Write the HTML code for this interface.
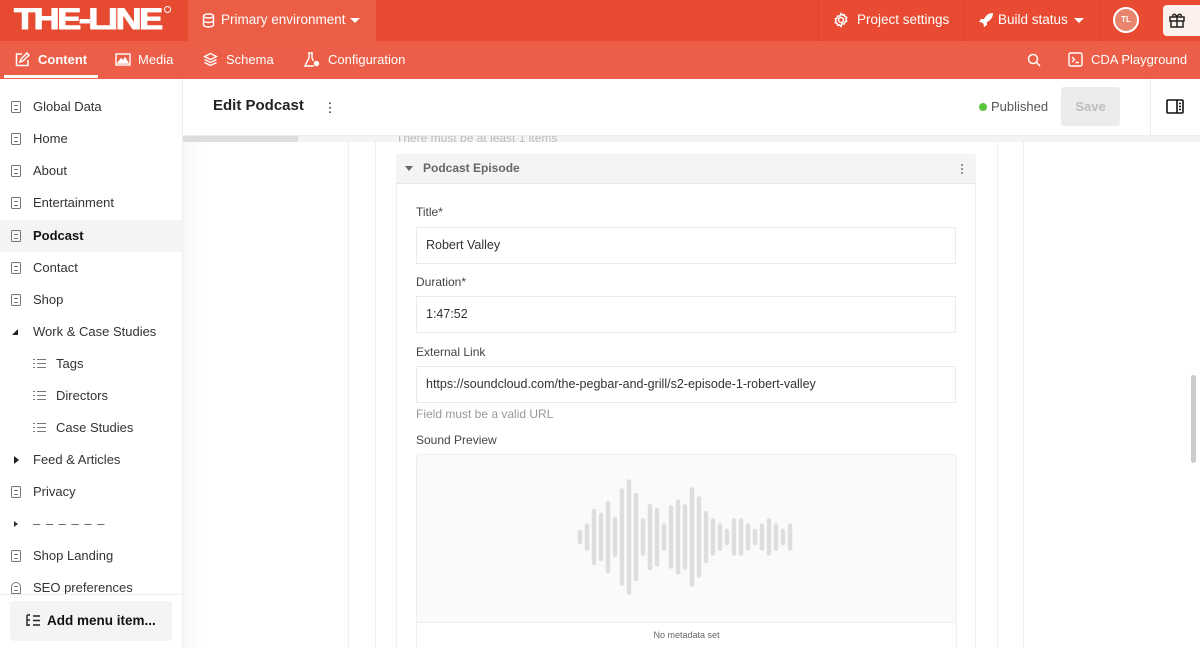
<!DOCTYPE html>
<html><head><meta charset="utf-8"><style>
*{box-sizing:border-box;margin:0;padding:0}
body{width:1200px;height:648px;overflow:hidden;font-family:"Liberation Sans",sans-serif;background:#fff;position:relative;color:#222}
.abs{position:absolute}
.top{left:0;top:0;width:1200px;height:41px;background:#e84b32}
.nav{left:0;top:41px;width:1200px;height:38px;background:#ec5e47}
.w{color:#fff;font-size:14px}
.side{left:0;top:79px;width:183px;height:569px;background:#fff;border-right:1px solid #eee}
.it{position:absolute;left:0;width:182px;height:32px;font-size:13px;color:#333;line-height:32px;padding-left:33px}
.doc{position:absolute;left:11px;top:10px;width:10px;height:12px;border:1.3px solid #777;border-radius:1.5px}
.doc:after{content:"";position:absolute;left:2px;top:3px;width:4px;height:3px;border-top:1px solid #777;border-bottom:1px solid #777}
.lst{position:absolute;left:33px;top:10px;width:13px;height:11px;background:linear-gradient(#777,#777) 4px 1px/9px 1.2px no-repeat,linear-gradient(#777,#777) 4px 5px/9px 1.2px no-repeat,linear-gradient(#777,#777) 4px 9px/9px 1.2px no-repeat,linear-gradient(#777,#777) 0 1px/2px 1.2px no-repeat,linear-gradient(#777,#777) 0 5px/2px 1.2px no-repeat,linear-gradient(#777,#777) 0 9px/2px 1.2px no-repeat}
.lbl{position:absolute;left:416px;font-size:12px;color:#444}
.inp{position:absolute;left:416px;width:540px;height:37px;border:1px solid #eaeaea;font-size:12.5px;color:#333;line-height:35px;padding-left:9px}
</style></head><body>
<div class="abs top"></div>
<div class="abs" style="left:0;top:0;width:188px;height:41px;background:#e64a30"></div>
<div class="abs" style="left:14px;top:4px;font:900 30px/32px 'Liberation Sans',sans-serif;color:#fff;letter-spacing:-2px;transform:scaleX(1.2);transform-origin:left;-webkit-text-stroke:1px #fff">THE-LINE</div>
<div class="abs" style="left:164px;top:6px;width:7px;height:7px;border:1px solid #fff;border-radius:50%"></div>
<div class="abs" style="left:188px;top:0;width:188px;height:41px;background:#ec5d46"></div>
<svg class="abs" style="left:202px;top:13px" width="13" height="15" viewBox="0 0 13 15" fill="none" stroke="#fff" stroke-width="1.4"><ellipse cx="6.5" cy="3" rx="5" ry="2"/><path d="M1.5 3v9c0 1.1 2.2 2 5 2s5-.9 5-2V3M1.5 7.5c0 1.1 2.2 2 5 2s5-.9 5-2"/></svg>
<div class="abs w" style="left:221px;top:12px;font-size:13.5px">Primary environment</div>
<div class="abs" style="left:350px;top:18px;border:5px solid transparent;border-top:5px solid #fff;border-bottom:0"></div>
<div class="abs" style="left:818px;top:0;width:1px;height:41px;background:#d9442c"></div>
<div class="abs" style="left:963px;top:0;width:1px;height:41px;background:#d9442c"></div>
<div class="abs" style="left:1100px;top:0;width:1px;height:41px;background:#d9442c"></div>
<svg class="abs" style="left:833px;top:12px" width="16" height="16" viewBox="0 0 16 16" fill="none" stroke="#fff" stroke-width="1.5"><circle cx="8" cy="8" r="2.5"/><path d="M8 1.5l1.3 1.6 2-.5.5 2 1.9.8-.7 1.9.7 1.9-1.9.8-.5 2-2-.5L8 14.5l-1.3-1.6-2 .5-.5-2-1.9-.8.7-1.9-.7-1.9 1.9-.8.5-2 2 .5z"/></svg>
<div class="abs w" style="left:857px;top:12px;font-size:13.5px">Project settings</div>
<svg class="abs" style="left:978px;top:12px" width="16" height="16" viewBox="0 0 16 16" fill="#fff"><path d="M15 1c-4 0-7 2-9 6L3 7 1 10l3 .5L5.5 12 6 15l3-2v-3c4-2 6-5 6-9z"/></svg>
<div class="abs w" style="left:998px;top:12px;font-size:13.5px">Build status</div>
<div class="abs" style="left:1074px;top:18px;border:5px solid transparent;border-top:5px solid #fff;border-bottom:0"></div>
<div class="abs" style="left:1113px;top:7px;width:26px;height:26px;border-radius:50%;background:#e9846f;border:2px solid #fff;color:#fff;font-size:8px;font-weight:bold;text-align:center;line-height:22px">TL</div>
<div class="abs" style="left:1163px;top:5px;width:37px;height:31px;background:#fdf1ee;border-radius:4px 0 0 4px"></div>
<svg class="abs" style="left:1168px;top:11px" width="18" height="18" viewBox="0 0 18 18" fill="none" stroke="#222" stroke-width="1.5"><rect x="2" y="6" width="14" height="4"/><path d="M3 10v6h12v-6M9 6v10M9 6C7 2 4 3 5 5.5M9 6c2-4 5-3 4-.5"/></svg>
<div class="abs nav"></div>
<svg class="abs" style="left:15px;top:52px" width="15" height="15" viewBox="0 0 15 15" fill="none" stroke="#fff" stroke-width="1.5"><path d="M7 2H1.5v11.5H13V8M5 10l1-3 6-6 2 2-6 6z"/></svg>
<div class="abs w" style="left:38px;top:52px;font-weight:bold;font-size:13px">Content</div>
<div class="abs" style="left:4px;top:75px;width:94px;height:3px;background:#fff"></div>
<svg class="abs" style="left:115px;top:53px" width="16" height="13" viewBox="0 0 16 13" fill="none" stroke="#fff" stroke-width="1.4"><rect x="1" y="1" width="14" height="11"/><path d="M3 10l3-4 2 2 2-3 3 5z" fill="#fff"/></svg>
<div class="abs w" style="left:138px;top:52px;font-size:13px">Media</div>
<svg class="abs" style="left:203px;top:52px" width="15" height="15" viewBox="0 0 15 15" fill="none" stroke="#fff" stroke-width="1.4"><path d="M7.5 1.5l6 3-6 3-6-3zM1.5 7.5l6 3 6-3M1.5 10.5l6 3 6-3"/></svg>
<div class="abs w" style="left:226px;top:52px;font-size:13px">Schema</div>
<svg class="abs" style="left:304px;top:52px" width="16" height="15" viewBox="0 0 16 15" fill="none" stroke="#fff" stroke-width="1.4"><path d="M4 1h5M5 1v5L1 14h9M8 1v5l1.5 3"/><circle cx="12.5" cy="11.5" r="2" fill="#fff"/></svg>
<div class="abs w" style="left:328px;top:52px;font-size:13px">Configuration</div>
<svg class="abs" style="left:1027px;top:53px" width="14" height="14" viewBox="0 0 14 14" fill="none" stroke="#fff" stroke-width="1.5"><circle cx="6" cy="6" r="4.5"/><path d="M9.5 9.5L13 13"/></svg>
<svg class="abs" style="left:1068px;top:52px" width="15" height="15" viewBox="0 0 15 15" fill="none" stroke="#fff" stroke-width="1.4"><rect x="1" y="1" width="13" height="13" rx="1.5"/><path d="M4 5l2.5 2.5L4 10M7.5 10.5H11"/></svg>
<div class="abs w" style="left:1091px;top:52px;font-size:13px">CDA Playground</div>

<div class="abs side"></div>
<div class="abs" style="left:0;top:79px;width:183px;height:569px">
<div class="it" style="top:12px"><span class="doc"></span>Global Data</div>
<div class="it" style="top:44px"><span class="doc"></span>Home</div>
<div class="it" style="top:76px"><span class="doc"></span>About</div>
<div class="it" style="top:108px"><span class="doc"></span>Entertainment</div>
<div class="it" style="top:141px;background:#f4f4f4;font-weight:bold;color:#111"><span class="doc"></span>Podcast</div>
<div class="it" style="top:173px"><span class="doc"></span>Contact</div>
<div class="it" style="top:205px"><span class="doc"></span>Shop</div>
<div class="it" style="top:237px"><span class="abs" style="left:12px;top:13px;border-left:6px solid transparent;border-bottom:6px solid #222"></span>Work &amp; Case Studies</div>
<div class="it" style="top:269px;padding-left:56px"><span class="lst"></span>Tags</div>
<div class="it" style="top:301px;padding-left:56px"><span class="lst"></span>Directors</div>
<div class="it" style="top:333px;padding-left:56px"><span class="lst"></span>Case Studies</div>
<div class="it" style="top:365px"><span class="abs" style="left:14px;top:12px;border-top:4px solid transparent;border-bottom:4px solid transparent;border-left:5px solid #222"></span>Feed &amp; Articles</div>
<div class="it" style="top:397px"><span class="doc"></span>Privacy</div>
<div class="it" style="top:429px;color:#555;letter-spacing:1px"><span class="abs" style="left:14px;top:13px;width:0;height:0;border-top:3px solid transparent;border-bottom:3px solid transparent;border-left:4px solid #333"></span>– – – – – –</div>
<div class="it" style="top:461px"><span class="doc"></span>Shop Landing</div>
<div class="it" style="top:493px"><span class="doc" style="border-radius:5px 5px 1px 1px"></span>SEO preferences</div>
<div class="abs" style="left:0;top:515px;width:182px;height:54px;background:#fff;border-top:1px solid #eee"></div>
<div class="abs" style="left:10px;top:522px;width:162px;height:40px;background:#f4f4f4;border-radius:4px;font-size:13.5px;font-weight:bold;line-height:40px;padding-left:37px;color:#111">Add menu item...</div>
<svg class="abs" style="left:26px;top:535px" width="15" height="13" viewBox="0 0 15 13" fill="none" stroke="#222" stroke-width="1.4"><path d="M1 1v11M1 1h3M1 6h3M1 11h3M7 2h7M7 6.5h7M7 11h7"/></svg>
</div>

<div class="abs" style="left:183px;top:79px;width:1017px;height:57px;border-bottom:1px solid #eee;background:#fff"></div>
<div class="abs" style="left:213px;top:97px;font-size:15px;font-weight:bold;color:#222">Edit Podcast</div>
<div class="abs" style="left:329px;top:101px;width:2px;height:12px;background:radial-gradient(circle,#666 0.9px,transparent 1.1px) 0 0/2px 4.5px"></div>
<div class="abs" style="left:979px;top:103px;width:8px;height:8px;border-radius:50%;background:#5ac43c"></div>
<div class="abs" style="left:991px;top:99px;font-size:13px;color:#555">Published</div>
<div class="abs" style="left:1061px;top:87px;width:59px;height:39px;background:#ececec;border-radius:3px;color:#bbb;font-weight:bold;font-size:13px;text-align:center;line-height:39px">Save</div>
<div class="abs" style="left:1150px;top:79px;width:1px;height:57px;background:#eee"></div>
<svg class="abs" style="left:1166px;top:99px" width="18" height="15" viewBox="0 0 18 15" fill="none" stroke="#111" stroke-width="1.6"><rect x="1" y="1" width="16" height="13" rx="1"/><path d="M11 1v13M13 4.5h2M13 7.5h2M13 10.5h2"/></svg>

<div class="abs" style="left:183px;top:136px;width:1017px;height:6px;background:#f3f3f3"></div>
<div class="abs" style="left:183px;top:136px;width:115px;height:6px;background:#ddd"></div>
<div class="abs" style="left:183px;top:142px;width:165px;height:506px;background:linear-gradient(90deg,#f7f7f7,#fff 20px)"></div>
<div class="abs" style="left:348px;top:142px;width:1px;height:506px;background:#eee"></div>
<div class="abs" style="left:375px;top:142px;width:1px;height:506px;background:#eee"></div>
<div class="abs" style="left:997px;top:142px;width:1px;height:506px;background:#eee"></div>
<div class="abs" style="left:1023px;top:142px;width:1px;height:506px;background:#eee"></div>
<div class="abs" style="left:1191px;top:375px;width:5px;height:88px;background:#ccc;border-radius:3px"></div>
<div class="abs" style="left:396px;top:136px;font-size:12px;color:#bbb;height:9px;overflow:hidden;line-height:4px">There must be at least 1 items</div>

<div class="abs" style="left:396px;top:154px;width:580px;height:494px;border:1px solid #eee;border-bottom:0;border-radius:3px 3px 0 0;background:#fff"></div>
<div class="abs" style="left:396px;top:154px;width:580px;height:30px;background:#f4f4f4;border-bottom:1px solid #e8e8e8;border-radius:3px 3px 0 0"></div>
<div class="abs" style="left:405px;top:166px;border:4.5px solid transparent;border-top:5px solid #666;border-bottom:0"></div>
<div class="abs" style="left:423px;top:161px;font-size:12px;font-weight:bold;color:#666">Podcast Episode</div>
<div class="abs" style="left:961px;top:163px;width:2px;height:11px;background:radial-gradient(circle,#777 0.9px,transparent 1.1px) 0 0/2px 4px"></div>
<div class="lbl" style="top:205px">Title*</div>
<div class="inp" style="top:227px">Robert Valley</div>
<div class="lbl" style="top:275px">Duration*</div>
<div class="inp" style="top:296px">1:47:52</div>
<div class="lbl" style="top:345px">External Link</div>
<div class="inp" style="top:366px">https://soundcloud.com/the-pegbar-and-grill/s2-episode-1-robert-valley</div>
<div class="lbl" style="top:407px;color:#999">Field must be a valid URL</div>
<div class="lbl" style="top:433px">Sound Preview</div>
<div class="abs" style="left:416px;top:454px;width:541px;height:194px;border:1px solid #eee;border-radius:4px 4px 0 0;background:#fafafa"></div>
<div class="abs" style="left:417px;top:622px;width:539px;height:26px;background:#fff;border-top:1px solid #eee;font-size:9px;color:#666;text-align:center;line-height:24px">No metadata set</div>
<svg class="abs" style="left:570px;top:470px" width="240" height="135">
<g stroke="#dedede" stroke-width="4.5" stroke-linecap="round" id="wv"></g>
</svg>
<script>
var h=[14,27,56,48,72,40,97,115,88,37,66,58,27,63,75,65,99,81,52,37,27,16,37,37,27,16,27,37,27,16,27];
var g=document.getElementById('wv'),s='';
for(var i=0;i<h.length;i++){var x=10+i*7,hh=h[i]/2-2;s+='<line x1="'+x+'" x2="'+x+'" y1="'+(67-hh)+'" y2="'+(67+hh)+'"/>';}
g.innerHTML=s;
</script>
</body></html>
